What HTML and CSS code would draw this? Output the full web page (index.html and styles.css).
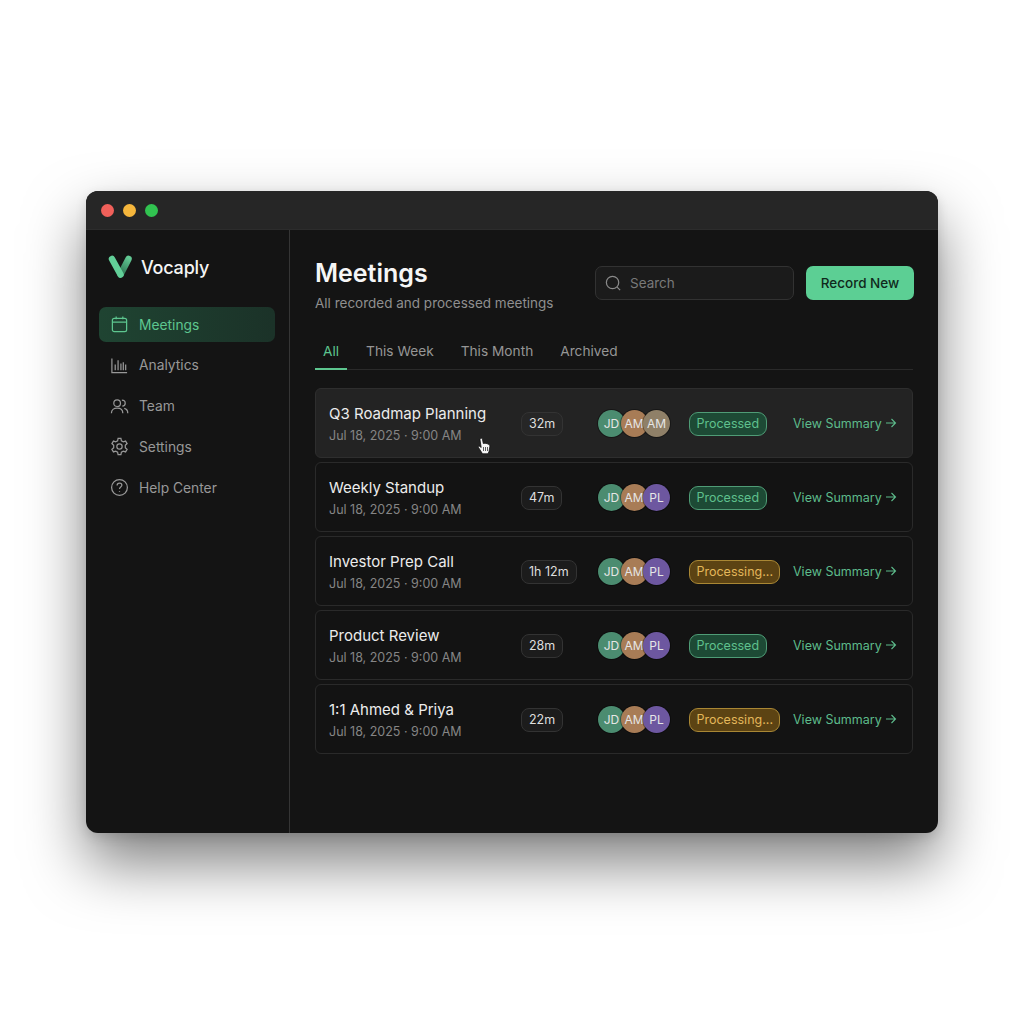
FILE: index.html
```html
<!DOCTYPE html>
<html lang="en">

<head>
    <meta charset="UTF-8">
    <meta name="viewport" content="width=device-width, initial-scale=1.0">
    <title>Vocaply - Meetings</title>
    <link rel="stylesheet" href="styles.css">
</head>

<body>
    <!-- shared arrow, used by every View Summary link -->
    <svg class="defs-only" width="0" height="0">
        <symbol id="arrow" viewBox="0 0 12 12">
            <path d="M1 6 H10.500 M6.500 2 L10.500 6 L6.500 10" />
        </symbol>
    </svg>

    <div class="window">
        <div class="titlebar">
            <span class="dot dot-red"></span>
            <span class="dot dot-yellow"></span>
            <span class="dot dot-green"></span>
        </div>

        <div class="window-body">
            <aside class="sidebar">
                <div class="logo">
                    <svg class="logo-mark" width="26" height="26" viewBox="0 0 26 26">
                        <defs>
                            <linearGradient id="logoRight" gradientUnits="userSpaceOnUse" x1="12" y1="20" x2="22" y2="4">
                                <stop offset="0" stop-color="#2a6f4e" />
                                <stop offset="1" stop-color="#62c994" />
                            </linearGradient>
                        </defs>
                        <path d="M21.500 5 L13.500 20.500" fill="none" stroke="url(#logoRight)" stroke-width="6.500" stroke-linecap="round" />
                        <path d="M5 5 L13.500 20.500" fill="none" stroke="#62cf98" stroke-width="6.500" stroke-linecap="round" />
                    </svg>
                    <span class="logo-name">Vocaply</span>
                </div>

                <nav class="nav">
                    <a class="nav-item active" href="#">
                        <svg class="nav-icon" viewBox="0 0 20 20">
                            <rect x="2.500" y="3.500" width="15" height="14" rx="2" />
                            <path d="M2.500 7.500 H17.500 M6.500 1.500 V4.500 M13.500 1.500 V4.500" />
                        </svg>
                        Meetings
                    </a>
                    <a class="nav-item" href="#">
                        <svg class="nav-icon" viewBox="0 0 20 20">
                            <path d="M2 2.500 V17.500 H18 M5.500 15 V9 M8.500 15 V4.500 M11.500 15 V8 M14 15 V6.500 M16.500 15 V9" />
                        </svg>
                        Analytics
                    </a>
                    <a class="nav-item" href="#">
                        <svg class="nav-icon" viewBox="0 0 20 20">
                            <circle cx="7.500" cy="6.500" r="3.500" />
                            <path d="M1.500 17 C1.500 13.500 4 11.800 7.500 11.800 C11 11.800 13.500 13.500 13.500 17" />
                            <path d="M12.500 3.300 C15 3.300 16 5 16 6.500 C16 8 15 9.400 13 9.700 M15 12 C17.500 12.600 18.700 14.500 18.700 17" />
                        </svg>
                        Team
                    </a>
                    <a class="nav-item" href="#">
                        <svg class="nav-icon" viewBox="0 0 20 20">
                            <circle cx="10" cy="10" r="2.800" />
                            <path d="M8.500 1.500 H11.500 L12 4 L14 5.100 L16.400 4.300 L18 6.900 L16.100 8.600 V11.400 L18 13.100 L16.400 15.700 L14 14.900 L12 16 L11.500 18.500 H8.500 L8 16 L6 14.900 L3.600 15.700 L2 13.100 L3.900 11.400 V8.600 L2 6.900 L3.600 4.300 L6 5.100 L8 4 Z" />
                        </svg>
                        Settings
                    </a>
                    <a class="nav-item" href="#">
                        <svg class="nav-icon" viewBox="0 0 20 20">
                            <circle cx="10" cy="10" r="8.300" />
                            <path d="M7.500 7.800 C7.500 6.300 8.700 5.500 10 5.500 C11.400 5.500 12.500 6.400 12.500 7.700 C12.500 9.500 10 9.600 10 11.600 M10 14 V14.800" />
                        </svg>
                        Help Center
                    </a>
                </nav>
            </aside>

            <main class="main">
                <header class="main-header">
                    <div>
                        <h1 class="page-title">Meetings</h1>
                        <p class="page-sub">All recorded and processed meetings</p>
                    </div>
                    <div class="header-actions">
                        <div class="search">
                            <svg class="search-icon" viewBox="0 0 20 20">
                                <circle cx="9" cy="9" r="6.500" />
                                <path d="M13.800 13.800 L17 17" />
                            </svg>
                            Search
                        </div>
                        <button class="btn-record">Record New</button>
                    </div>
                </header>

                <div class="tabs">
                    <a class="tab active" href="#">All</a>
                    <a class="tab" href="#">This Week</a>
                    <a class="tab" href="#">This Month</a>
                    <a class="tab" href="#">Archived</a>
                </div>

                <div class="meeting-list">
                    <div class="meeting hover">
                        <div class="meeting-info">
                            <div class="meeting-title">Q3 Roadmap Planning</div>
                            <div class="meeting-date">Jul 18, 2025 · 9:00 AM</div>
                        </div>
                        <div class="cell"><span class="duration">32m</span></div>
                        <div class="avatars">
                            <span class="avatar av-green">JD</span>
                            <span class="avatar av-brown">AM</span>
                            <span class="avatar av-tan">AM</span>
                        </div>
                        <div class="cell"><span class="status processed">Processed</span></div>
                        <a class="view-link" href="#">View Summary <svg class="arrow"><use href="#arrow" /></svg></a>
                    </div>

                    <div class="meeting">
                        <div class="meeting-info">
                            <div class="meeting-title">Weekly Standup</div>
                            <div class="meeting-date">Jul 18, 2025 · 9:00 AM</div>
                        </div>
                        <div class="cell"><span class="duration">47m</span></div>
                        <div class="avatars">
                            <span class="avatar av-green">JD</span>
                            <span class="avatar av-brown">AM</span>
                            <span class="avatar av-purple">PL</span>
                        </div>
                        <div class="cell"><span class="status processed">Processed</span></div>
                        <a class="view-link" href="#">View Summary <svg class="arrow"><use href="#arrow" /></svg></a>
                    </div>

                    <div class="meeting">
                        <div class="meeting-info">
                            <div class="meeting-title">Investor Prep Call</div>
                            <div class="meeting-date">Jul 18, 2025 · 9:00 AM</div>
                        </div>
                        <div class="cell"><span class="duration">1h 12m</span></div>
                        <div class="avatars">
                            <span class="avatar av-green">JD</span>
                            <span class="avatar av-brown">AM</span>
                            <span class="avatar av-purple">PL</span>
                        </div>
                        <div class="cell"><span class="status processing">Processing...</span></div>
                        <a class="view-link" href="#">View Summary <svg class="arrow"><use href="#arrow" /></svg></a>
                    </div>

                    <div class="meeting">
                        <div class="meeting-info">
                            <div class="meeting-title">Product Review</div>
                            <div class="meeting-date">Jul 18, 2025 · 9:00 AM</div>
                        </div>
                        <div class="cell"><span class="duration">28m</span></div>
                        <div class="avatars">
                            <span class="avatar av-green">JD</span>
                            <span class="avatar av-brown">AM</span>
                            <span class="avatar av-purple">PL</span>
                        </div>
                        <div class="cell"><span class="status processed">Processed</span></div>
                        <a class="view-link" href="#">View Summary <svg class="arrow"><use href="#arrow" /></svg></a>
                    </div>

                    <div class="meeting">
                        <div class="meeting-info">
                            <div class="meeting-title">1:1 Ahmed &amp; Priya</div>
                            <div class="meeting-date">Jul 18, 2025 · 9:00 AM</div>
                        </div>
                        <div class="cell"><span class="duration">22m</span></div>
                        <div class="avatars">
                            <span class="avatar av-green">JD</span>
                            <span class="avatar av-brown">AM</span>
                            <span class="avatar av-purple">PL</span>
                        </div>
                        <div class="cell"><span class="status processing">Processing...</span></div>
                        <a class="view-link" href="#">View Summary <svg class="arrow"><use href="#arrow" /></svg></a>
                    </div>
                </div>
            </main>
        </div>

        <!-- mouse pointer sitting on the first row -->
        <svg class="cursor" width="14" height="18" viewBox="0 0 14 18">
            <path d="M3.500 1.500 C4.500 1 5.300 1.500 5.500 2.500 L6.300 6.500 L8 6.200 L10 6.600 L12 7.500 C12.800 8 13 8.800 12.800 10 L12 14.500 L11 16.800 H5.500 L1.500 10.500 C1 9.500 2 8.800 3 9.500 L4.200 10.500 L3 3 C2.900 2.300 3 1.800 3.500 1.500 Z" fill="#f4f4f4" stroke="#111" stroke-width="0.800" />
            <path d="M6.500 10 V14 M8.500 10 V14 M10.500 10 V14" fill="none" stroke="#333" stroke-width="0.800" />
        </svg>
    </div>
</body>

</html>
```

FILE: styles.css
```css
* {
    margin: 0;
    padding: 0;
    box-sizing: border-box;
}

body {
    font-family: Inter, "Liberation Sans", sans-serif;
    background-color: #ffffff;
    padding: 191px 86px 0;
    overflow: hidden;
    height: 1024px;
}

a {
    text-decoration: none;
}

.defs-only {
    display: block;
}

.window {
    position: relative;
    width: 852px;
    height: 642px;
    border-radius: 12px;
    background-color: #141414;
    box-shadow: 0 30px 60px rgba(0, 0, 0, 0.5), 0 4px 12px rgba(0, 0, 0, 0.12);
}

.titlebar {
    display: flex;
    align-items: center;
    gap: 9px;
    height: 39px;
    padding-left: 15px;
    background-color: #262626;
    border-radius: 12px 12px 0 0;
    border-bottom: 1px solid #2c2c2c;
}

.dot {
    width: 13px;
    height: 13px;
    border-radius: 50%;
}

.dot-red {
    background-color: #f0605a;
}

.dot-yellow {
    background-color: #f5b63c;
}

.dot-green {
    background-color: #31c350;
}

.window-body {
    display: flex;
    height: 603px;
}

.sidebar {
    width: 204px;
    padding: 22px 13px 0;
    border-right: 1px solid #353535;
    flex-shrink: 0;
}

.logo {
    display: flex;
    align-items: center;
    gap: 8px;
    height: 30px;
    padding-left: 8px;
}

.logo-name {
    font-size: 18px;
    font-weight: 500;
    color: #f5f5f5;
    letter-spacing: -0.2px;
}

.nav {
    display: flex;
    flex-direction: column;
    gap: 5.800px;
    margin-top: 25px;
    margin-right: 1px;
}

.nav-item {
    display: flex;
    align-items: center;
    gap: 10px;
    height: 35px;
    padding-left: 11px;
    font-size: 13.800px;
    color: #989898;
    border-radius: 7px;
}

.nav-item.active {
    color: #5dc68f;
    background-color: #1e3e2f;
    background-image: linear-gradient(90deg, #1f4432, #1b3228);
}

.nav-icon {
    width: 19px;
    height: 19px;
    fill: none;
    stroke: currentColor;
    stroke-width: 1.300;
    flex-shrink: 0;
}

.main {
    flex: 1;
    padding: 26px 25px 0;
}

.main-header {
    display: flex;
    justify-content: space-between;
    align-items: flex-start;
}

.page-title {
    font-size: 25px;
    font-weight: 600;
    line-height: 34px;
    color: #f6f6f6;
}

.page-sub {
    font-size: 13.500px;
    line-height: 18px;
    margin-top: 4px;
    color: #8f8f8f;
}

.header-actions {
    display: flex;
    gap: 12px;
    margin-top: 10px;
    margin-right: -1px;
}

.search {
    display: flex;
    align-items: center;
    gap: 7px;
    width: 199px;
    height: 34px;
    padding-left: 8px;
    font-size: 13.500px;
    color: #797979;
    background-color: #1b1b1b;
    border: 1px solid #323232;
    border-radius: 7px;
}

.search-icon {
    width: 19px;
    height: 19px;
    fill: none;
    stroke: #8a8a8a;
    stroke-width: 1.300;
}

.btn-record {
    width: 108px;
    height: 34px;
    font-family: inherit;
    font-size: 13.500px;
    font-weight: 500;
    color: #10291c;
    background-color: #5ccf94;
    border: none;
    border-radius: 7px;
}

.tabs {
    display: flex;
    gap: 11px;
    margin-top: 24px;
    border-bottom: 1px solid #2a2a2a;
}

.tab {
    padding: 0 8px;
    height: 34px;
    line-height: 30px;
    font-size: 13.700px;
    color: #969696;
    margin-bottom: -1px;
}

.tab.active {
    color: #5dc68f;
    border-bottom: 2px solid #5dc68f;
}

.meeting-list {
    display: flex;
    flex-direction: column;
    gap: 4px;
    margin-top: 18px;
}

.meeting {
    display: grid;
    grid-template-columns: 192px 77px 91px 104px auto;
    align-items: center;
    height: 70px;
    padding-left: 13px;
    background-color: #131313;
    border: 1px solid #2a2a2a;
    border-radius: 6px;
}

.meeting.hover {
    background-color: #232323;
    border-color: #2e2e2e;
}

.meeting-info {
    padding-top: 1px;
}

.meeting-title {
    font-size: 15px;
    line-height: 20px;
    color: #ececec;
}

.meeting-date {
    font-size: 12.500px;
    line-height: 16px;
    margin-top: 4px;
    color: #858585;
}

.cell {
    display: flex;
    padding-top: 2px;
}

.duration {
    height: 24px;
    padding: 0 7px;
    font-size: 12.500px;
    line-height: 22px;
    color: #dedede;
    background-color: #1c1c1c;
    border: 1px solid #333333;
    border-radius: 8px;
}

.meeting.hover .duration {
    background-color: #262626;
}

.avatars {
    display: flex;
}

.avatar {
    display: flex;
    align-items: center;
    justify-content: center;
    width: 27px;
    height: 27px;
    margin-right: -4.500px;
    border-radius: 50%;
    font-size: 12px;
    color: #e6e6e6;
    box-shadow: 0 0 0 1px rgba(0, 0, 0, 0.35);
}

.av-green {
    background-color: #4b8c70;
}

.av-brown {
    background-color: #a87c56;
}

.av-tan {
    background-color: #8f8068;
}

.av-purple {
    background-color: #6d57a0;
}

.status {
    height: 24px;
    padding: 0 6.500px;
    font-size: 12.500px;
    line-height: 22px;
    border-radius: 9px;
}

.processed {
    color: #5fc08d;
    background-color: #1d4a35;
    border: 1px solid #4f9c76;
}

.processing {
    color: #e3b75a;
    background-color: #5c4313;
    border: 1px solid #a98734;
}

.view-link {
    display: flex;
    align-items: center;
    gap: 3px;
    font-size: 12.500px;
    color: #5dbb8b;
    white-space: nowrap;
}

.arrow {
    width: 12px;
    height: 12px;
    fill: none;
    stroke: currentColor;
    stroke-width: 1.100;
}

.cursor {
    position: absolute;
    left: 391px;
    top: 246px;
}
```
